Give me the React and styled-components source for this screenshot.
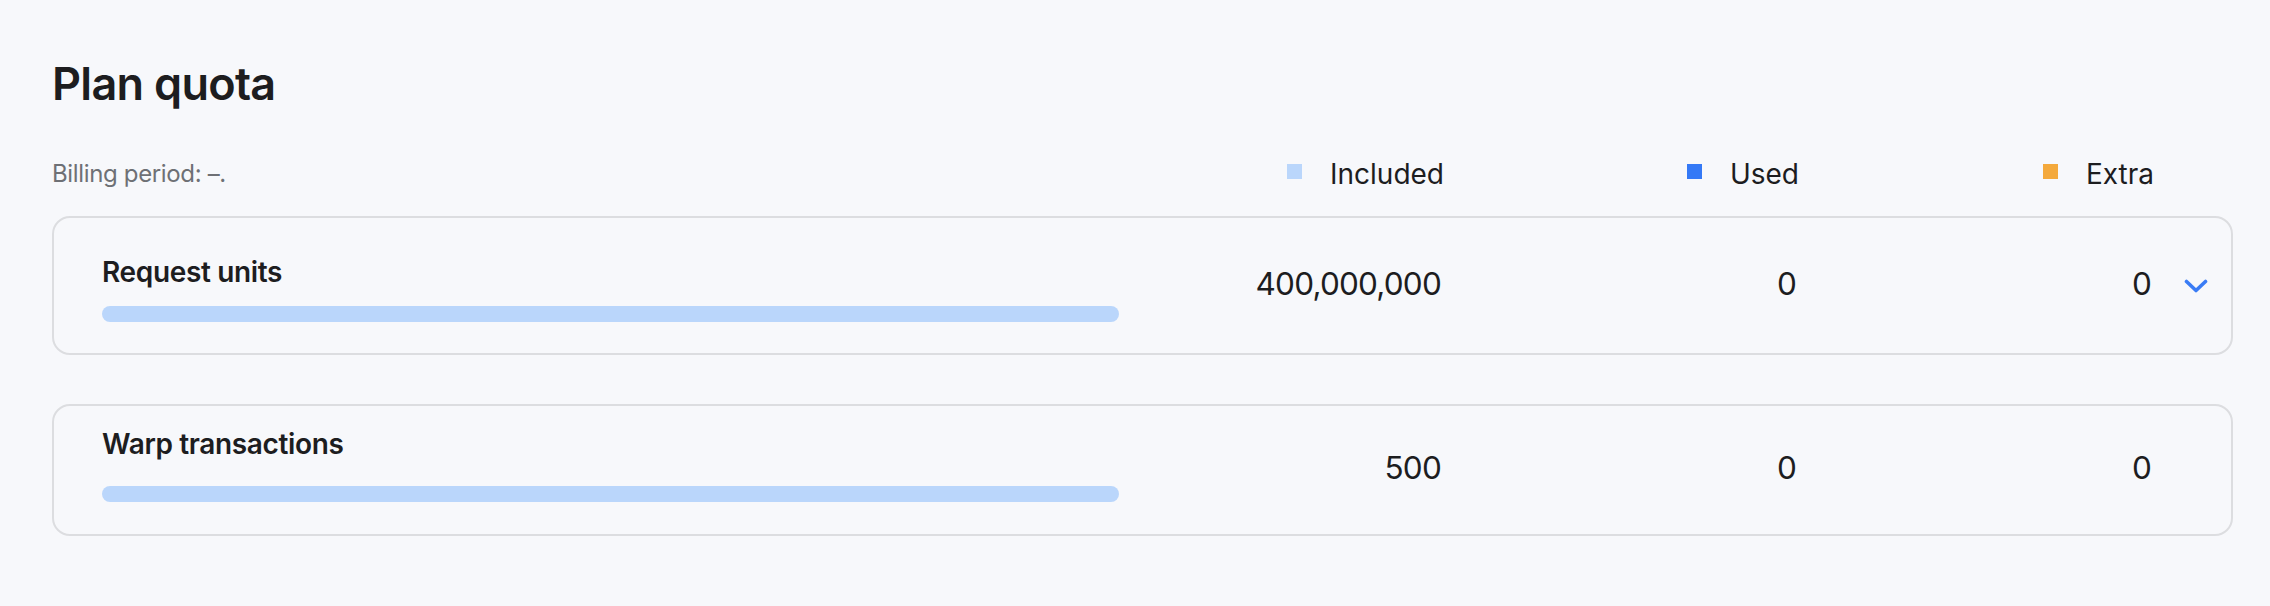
import styled, { createGlobalStyle } from 'styled-components';

const GlobalStyle = createGlobalStyle`
  html, body {
    margin: 0;
    padding: 0;
    background: #f7f8fb;
  }
  body {
    font-family: Inter, "Noto Sans", "Liberation Sans", sans-serif;
    color: #1d1d1f;
  }
`;

const quotas = [
  { name: 'Request units', included: '400,000,000', used: '0', extra: '0', expandable: true, top: 37, gap: 17, bottom: 31 },
  { name: 'Warp transactions', included: '500', used: '0', extra: '0', expandable: false, top: 21, gap: 25, bottom: 32 },
];

const legend = [
  { label: 'Included', color: '#bad6fb' },
  { label: 'Used', color: '#3479f6' },
  { label: 'Extra', color: '#f4a93c' },
];

function Chevron() {
  return (
    <svg width="24" height="14" viewBox="0 0 24 14" fill="none">
      <polyline
        points="2.5,2.5 12,11.5 21.5,2.5"
        stroke="#3a7cf5"
        strokeWidth="3.6"
        strokeLinecap="round"
        strokeLinejoin="round"
      />
    </svg>
  );
}

export default function App() {
  return (
    <>
      <GlobalStyle />
      <Page>
        <Title>Plan quota</Title>
        <Header>
          <Billing>Billing period: –.</Billing>
          {legend.map((l) => (
            <LegendItem key={l.label}>
              <Swatch $color={l.color} />
              <span>{l.label}</span>
            </LegendItem>
          ))}
          <div />
        </Header>
        <List>
          {quotas.map((q) => (
            <Card key={q.name}>
              <Meta $top={q.top} $gap={q.gap} $bottom={q.bottom}>
                <Name>{q.name}</Name>
                <Bar />
              </Meta>
              <Value>{q.included}</Value>
              <Value>{q.used}</Value>
              <Value>{q.extra}</Value>
              <Toggle>{q.expandable && <Chevron />}</Toggle>
            </Card>
          ))}
        </List>
      </Page>
    </>
  );
}

const Page = styled.div`
  padding: 57px 37px 40px 52px;
`;

const Title = styled.h1`
  margin: 0;
  font-size: 45px;
  line-height: 54px;
  font-weight: 600;
  letter-spacing: -0.7px;
  color: #1d1d1f;
`;

const Header = styled.div`
  display: grid;
  grid-template-columns: 1fr 322px 355px 355px 57px;
  align-items: center;
  margin-top: 46px;
  padding-right: 22px;
  height: 34px;
`;

const Billing = styled.div`
  font-size: 24px;
  line-height: 34px;
  letter-spacing: -0.35px;
  color: #6e7075;
`;

const LegendItem = styled.div`
  display: flex;
  align-items: center;
  justify-content: flex-end;
  gap: 28px;
  font-size: 28px;
  line-height: 34px;
  color: #1d1d1f;
`;

const Swatch = styled.span`
  width: 15px;
  height: 15px;
  margin-bottom: 5px;
  background: ${(p) => p.$color};
`;

const List = styled.div`
  display: flex;
  flex-direction: column;
  gap: 49px;
  margin-top: 25px;
`;

const Card = styled.div`
  display: grid;
  grid-template-columns: 1fr 322px 355px 355px 57px;
  align-items: center;
  border: 2px solid #dcdde0;
  border-radius: 18px;
  padding: 0 23px 0 48px;
`;

const Meta = styled.div`
  display: flex;
  flex-direction: column;
  gap: ${(p) => p.$gap}px;
  padding: ${(p) => p.$top}px 0 ${(p) => p.$bottom}px;
`;

const Name = styled.div`
  font-size: 28px;
  line-height: 34px;
  font-weight: 600;
  letter-spacing: -0.35px;
  color: #1d1d1f;
`;

const Bar = styled.div`
  height: 16px;
  border-radius: 8px;
  background: #bad6fb;
`;

const Value = styled.div`
  text-align: right;
  font-size: 31.5px;
  line-height: 38px;
  letter-spacing: -0.8px;
  margin-bottom: 4px;
  color: #1d1d1f;
`;

const Toggle = styled.div`
  display: flex;
  justify-content: flex-end;
  align-items: center;
`;
